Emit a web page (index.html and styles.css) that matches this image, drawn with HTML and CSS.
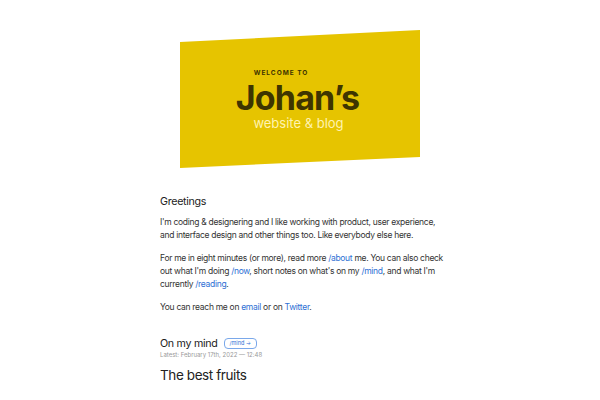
FILE: index.html
```html
<!DOCTYPE html>
<html>
<head>
<meta charset="utf-8">
<link rel="stylesheet" href="styles.css">
</head>
<body>
<header class="hero">
  <div class="banner">
    <div class="welcome">WELCOME TO</div>
    <div class="name">Johan’s</div>
    <div class="tagline">website &amp; blog</div>
  </div>
</header>
<main class="content">
  <h2 class="h-greet">Greetings</h2>
  <p>I'm coding &amp; designering and I like working with product, user experience, and interface design and other things too. Like everybody else here.</p>
  <p>For me in eight minutes (or more), read more <a href="#">/about</a> me. You can also check out what I'm doing <a href="#">/now</a>, short notes on what's on my <a href="#">/mind</a>, and what I'm currently <a href="#">/reading</a>.</p>
  <p>You can reach me on <a href="#">email</a> or on <a href="#">Twitter</a>.</p>
  <div class="mind-head">
    <h2 class="h-mind">On my mind</h2>
    <a class="badge" href="#">/mind →</a>
  </div>
  <div class="latest">Latest: February 17th, 2022 — 12:48</div>
  <h1 class="post-title">The best fruits</h1>
</main>
</body>
</html>
```
FILE: styles.css
```css
html, body {
  margin: 0;
  padding: 0;
  background: #fff;
}
body {
  font-family: Inter, "Noto Sans", sans-serif;
  color: #333;
}
.hero {
  display: flex;
  justify-content: center;
  padding-top: 30px;
}
.banner {
  width: 240px;
  height: 138px;
  background: #e6c400;
  clip-path: polygon(0 12px, 100% 0, 100% 127px, 0 138px);
  display: flex;
  flex-direction: column;
  align-items: center;
  box-sizing: border-box;
  padding-top: 39px;
}
.welcome {
  font-size: 6.5px;
  font-weight: 700;
  letter-spacing: 1px;
  color: #3e3500;
  line-height: 8px;
  margin-left: -38px;
}
.name {
  font-size: 34px;
  font-weight: 700;
  letter-spacing: -0.8px;
  color: #3e3500;
  line-height: 34px;
  margin-top: 4px;
  margin-right: 5px;
}
.tagline {
  font-size: 13px;
  color: #fff3b0;
  line-height: 16px;
  margin-right: 3px;
}
.content {
  width: 280px;
  margin: 0 auto;
  padding-top: 27px;
  font-size: 8.5px;
  line-height: 13px;
  letter-spacing: -0.3px;
}
h2 {
  margin: 0;
  font-weight: 400;
  font-size: 10.7px;
  letter-spacing: -0.3px;
  color: #222;
}
.h-greet {
  margin-bottom: 8px;
}
p {
  margin: 0 -8px 10px 0;
}
a {
  color: #2e6fd4;
  text-decoration: none;
}
.mind-head {
  display: flex;
  align-items: center;
  gap: 6px;
  margin-top: 23px;
}
.badge {
  font-size: 5.5px;
  line-height: 9px;
  letter-spacing: 0;
  padding: 0 5px;
  border: 1px solid #7aa8ea;
  border-radius: 4px;
}
.latest {
  font-size: 6px;
  letter-spacing: 0;
  color: #999;
  margin-top: 1px;
  line-height: 8px;
}
.post-title {
  font-size: 13.5px;
  font-weight: 400;
  letter-spacing: -0.4px;
  color: #222;
  margin: 10px 0 0;
}
```
